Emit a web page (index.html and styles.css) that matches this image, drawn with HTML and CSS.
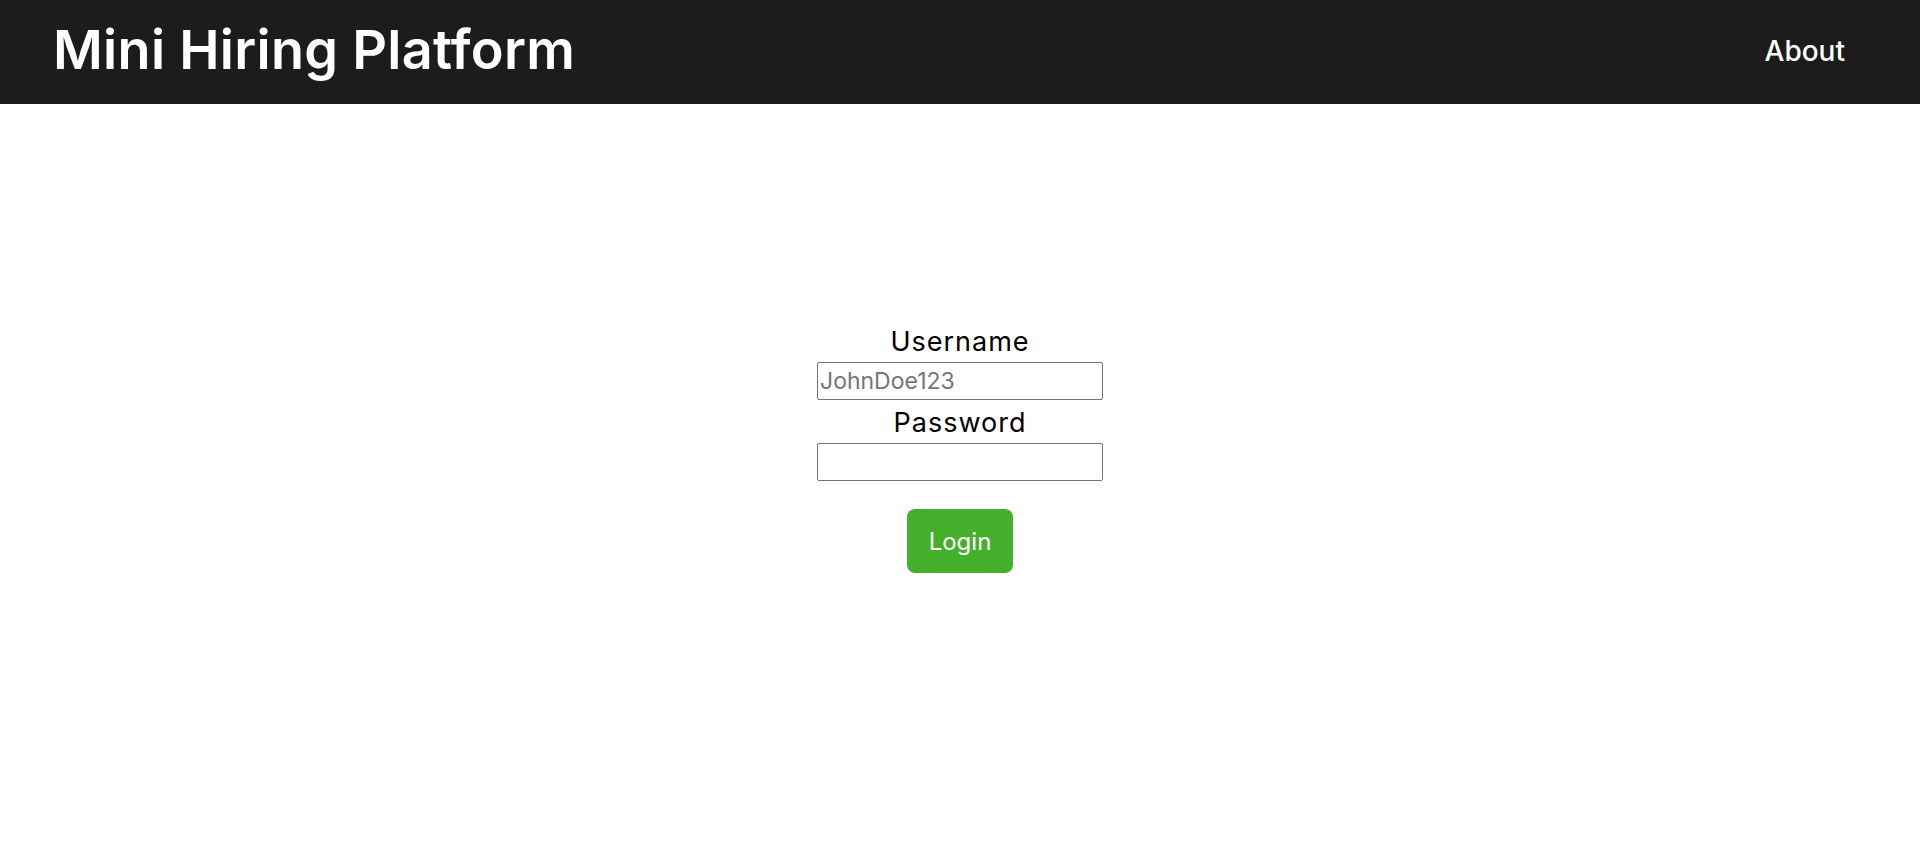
FILE: index.html
```html
<!DOCTYPE html>
<html lang="en">
<head>
<meta charset="utf-8">
<title>Mini Hiring Platform</title>
<link rel="stylesheet" href="styles.css">
</head>
<body>
<header class="topbar">
  <h1 class="brand">Mini Hiring Platform</h1>
  <nav class="nav"><a class="nav-link" href="#">About</a></nav>
</header>
<main class="main">
  <form class="login-form">
    <label class="field-label" for="username">Username</label>
    <input class="field-input" id="username" type="text" placeholder="JohnDoe123">
    <label class="field-label" for="password">Password</label>
    <input class="field-input" id="password" type="password">
    <button class="login-btn" type="button">Login</button>
  </form>
</main>
</body>
</html>
```
FILE: styles.css
```css
* { box-sizing: border-box; }
html, body { margin: 0; padding: 0; background: #fff; }
body { font-family: Inter, "Open Sans", sans-serif; color: #000; }

.topbar {
  height: 104px;
  background: #1c1c1c;
  display: flex;
  align-items: center;
  justify-content: space-between;
  padding: 0 75px 0 53px;
}
.brand {
  margin: 0;
  color: #fff;
  font-size: 54px;
  font-weight: 600;
  letter-spacing: 0.3px;
  line-height: 1;
  padding-bottom: 4px;
}
.nav-link {
  display: block;
  color: #fff;
  text-decoration: none;
  font-size: 28px;
  font-weight: 500;
  line-height: 1;
  padding-bottom: 2px;
}

.main {
  display: flex;
  justify-content: center;
  padding-top: 222px;
}
.login-form {
  display: flex;
  flex-direction: column;
  align-items: center;
}
.field-label {
  font-size: 27px;
  line-height: 32px;
  font-weight: 400;
  letter-spacing: 1px;
}
.field-input {
  width: 286px;
  height: 38px;
  margin: 4px 0 7px;
  border: 1px solid #767676;
  border-radius: 2px;
  padding: 0 2px;
  font-family: inherit;
  font-size: 23px;
  color: #000;
  background: #fff;
}
.field-input::placeholder { color: #767676; }
.login-btn {
  margin-top: 21px;
  width: 106px;
  height: 64px;
  border: none;
  border-radius: 8px;
  background: #44b02c;
  color: #fff;
  font-family: inherit;
  font-size: 24px;
  font-weight: 400;
  cursor: pointer;
}
```
